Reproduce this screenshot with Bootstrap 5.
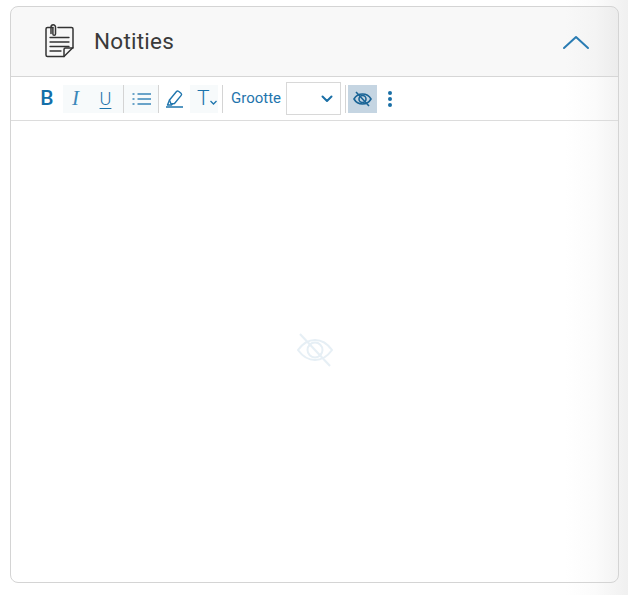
<!doctype html>
<html lang="nl"><head><meta charset="utf-8"><title>Notities</title>
<link href="https://cdn.jsdelivr.net/npm/bootstrap@5.3.0/dist/css/bootstrap.min.css" rel="stylesheet">
<style>
html,body{height:100%}
body{margin:0;font-family:Roboto,"Liberation Sans",sans-serif;background:linear-gradient(90deg,#fff 0,#fff 565px,#fbfbfb 595px,#f0f0f0 628px);padding:6px 10px 12px;overflow:hidden}
.note-card{height:577px;width:609px;border:1px solid #d4d4d4;border-radius:8px;background:transparent;overflow:hidden}
.note-head{height:70px;background:rgba(0,0,0,.028);border-bottom:1px solid #d6d6d6;padding:0 28px 0 32px}
.note-head h1{font-size:22.5px;font-weight:400;color:#3a3a3a;margin:0 0 0 17px;letter-spacing:.25px}
.note-tools{height:44px;border-bottom:1px solid #dcdcdc;padding-left:25px;color:#1f75ad}
.tbtn{height:28px;display:flex;align-items:center;justify-content:center;border:0;padding:0;background:transparent;color:#1a72ab;font-family:Roboto,"Liberation Sans",sans-serif;line-height:1}
.tbtn.tint{background:#f7fafb}
.sep{width:1px;height:28px;background:#d4d4d4}
.b-btn{width:22px;font-size:21px;font-weight:500;margin-right:5px;color:#146fa9}
.tbtn.i-btn{width:25px;font-size:21px;font-style:italic;font-weight:300;font-family:"Liberation Serif",serif;color:#3b87b9}
.u-btn{width:35px;font-size:18px;font-weight:300;text-decoration:underline;text-underline-offset:3px}
.list-btn{width:34px}
.pen-btn{width:31px}
.t-btn{width:28px;font-size:21px;font-weight:300;justify-content:flex-start;padding-left:7px;margin-right:4px}
.size-label{font-size:15px;color:#1f75ad;margin:0 5px 0 8px}
.size-box{width:55px;height:33px;border:1px solid #d8d8d8;background:#fff;padding-right:7px}
.eye-on{width:29px;background:#c5d5e2;margin:0 10px 0 2px}
.dots{width:6px}
.note-body{flex:1;padding-bottom:4px}
</style></head>
<body>
<div class="card note-card d-flex flex-column">
  <div class="note-head d-flex align-items-center">
    <svg width="34" height="36" viewBox="0 0 34 36" fill="none" stroke="#333" stroke-width="1.5" stroke-linecap="round" stroke-linejoin="round" aria-hidden="true">
      <path d="M10 3.5H4.5a1.5 1.5 0 0 0-1.5 1.5v26a1.5 1.5 0 0 0 1.5 1.5H21l9-9V5a1.5 1.5 0 0 0-1.500-1.500H15"/>
      <path d="M21 32.500v-7a1.500 1.500 0 0 1 1.500-1.500H30"/>
      <path d="M8 9.500V3a2.200 2.200 0 0 1 4.500 0v7a1.300 1.300 0 0 1-2.600 0V4"/>
      <path d="M7 13.500h19M7 18h19M7 22.500h19M7 27h11" stroke-width="1.300"/>
    </svg>
    <h1>Notities</h1>
    <svg class="ms-auto" width="28" height="16" viewBox="0 0 28 16" fill="none" stroke="#2a7cb3" stroke-width="2" stroke-linecap="round" stroke-linejoin="round" aria-hidden="true"><path d="M2 14 14 3l12 11"/></svg>
  </div>
  <div class="note-tools d-flex align-items-center">
    <button class="tbtn b-btn">B</button>
    <button class="tbtn i-btn tint">I</button>
    <button class="tbtn u-btn tint">U</button>
    <span class="sep"></span>
    <button class="tbtn list-btn tint"><svg width="19" height="14" viewBox="0 0 19 14" fill="none" stroke="#3b87b9" stroke-width="1.500" aria-hidden="true"><path d="M5.500 2H19M5.500 7H19M5.500 12H19M.5 2h2M.5 7h2M.5 12h2"/></svg></button>
    <span class="sep"></span>
    <button class="tbtn pen-btn"><svg width="19" height="19" viewBox="0 0 19 19" fill="none" stroke="#1f75ad" stroke-width="1.400" stroke-linejoin="round" aria-hidden="true"><path d="M4.500 11 11.500 2.500a1.500 1.500 0 0 1 2-.2l2.500 2a1.500 1.500 0 0 1 .2 2.100L9.500 14.500l-3.500 .5z"/><path d="M4.500 11 2.500 16h4l1-1.500M1 18h17"/></svg></button>
    <button class="tbtn t-btn tint">T<svg class="mt-2" width="7" height="5" viewBox="0 0 7 5" fill="none" stroke="#1f75ad" stroke-width="1.300" aria-hidden="true"><path d="m.5 1 3 3 3-3"/></svg></button>
    <span class="sep"></span>
    <span class="size-label">Grootte</span>
    <div class="size-box d-flex align-items-center justify-content-end"><svg width="12" height="8" viewBox="0 0 12 8" fill="none" stroke="#1a6fa6" stroke-width="2" stroke-linecap="round" stroke-linejoin="round" aria-hidden="true"><path d="m1.500 1.500 4.500 4.500 4.500-4.500"/></svg></div>
    <span class="sep ms-1"></span>
    <button class="tbtn eye-on"><svg width="19" height="16" viewBox="0 0 19 16" fill="none" stroke="#1a6496" stroke-width="1.600" aria-hidden="true"><path d="M1 8c2-3.500 5-5 8.500-5S16 4.500 18 8c-2 3.500-5 5-8.500 5S3 11.500 1 8z"/><circle cx="9.500" cy="8" r="3.500"/><path d="M3 1l13 14"/></svg></button>
    <svg class="dots" width="6" height="18" viewBox="0 0 6 18" fill="#1a6fa6" aria-hidden="true"><circle cx="3" cy="3" r="2"/><circle cx="3" cy="9" r="2"/><circle cx="3" cy="15" r="2"/></svg>
  </div>
  <div class="note-body d-flex align-items-center justify-content-center">
    <svg width="38" height="34" viewBox="0 0 38 34" fill="none" stroke="#e6eff5" stroke-width="2" aria-hidden="true"><path d="M2 17C7 10 12 7 19 7s12 3 17 10c-5 7-10 10-17 10S7 24 2 17z"/><circle cx="19" cy="17" r="7.500"/><path d="M4 1l30 32"/></svg>
  </div>
</div>
<script src="https://cdn.jsdelivr.net/npm/bootstrap@5.3.0/dist/js/bootstrap.bundle.min.js"></script>
</body></html>
